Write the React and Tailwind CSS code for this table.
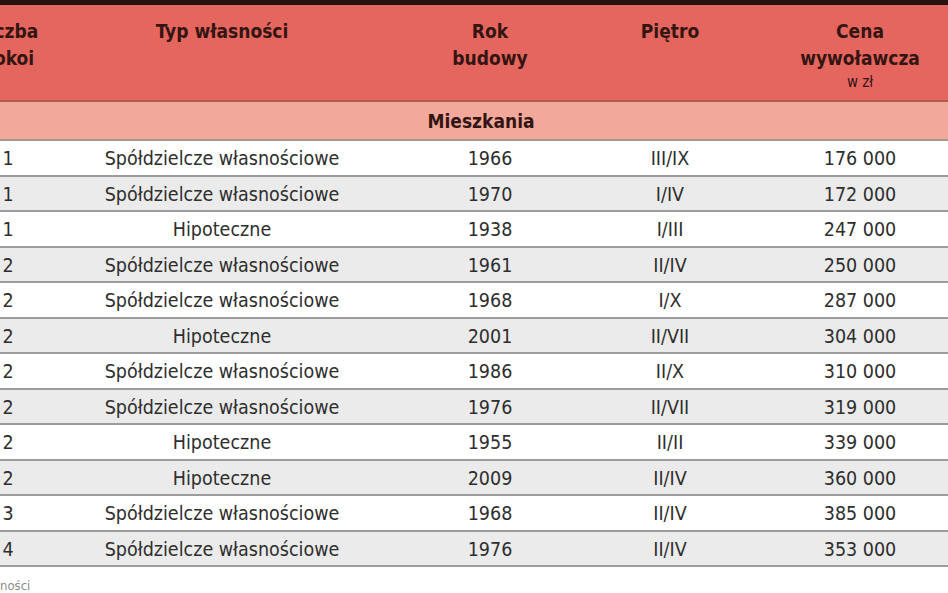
const rows = [
  ["1", "Spółdzielcze własnościowe", "1966", "III/IX", "176 000"],
  ["1", "Spółdzielcze własnościowe", "1970", "I/IV", "172 000"],
  ["1", "Hipoteczne", "1938", "I/III", "247 000"],
  ["2", "Spółdzielcze własnościowe", "1961", "II/IV", "250 000"],
  ["2", "Spółdzielcze własnościowe", "1968", "I/X", "287 000"],
  ["2", "Hipoteczne", "2001", "II/VII", "304 000"],
  ["2", "Spółdzielcze własnościowe", "1986", "II/X", "310 000"],
  ["2", "Spółdzielcze własnościowe", "1976", "II/VII", "319 000"],
  ["2", "Hipoteczne", "1955", "II/II", "339 000"],
  ["2", "Hipoteczne", "2009", "II/IV", "360 000"],
  ["3", "Spółdzielcze własnościowe", "1968", "II/IV", "385 000"],
  ["4", "Spółdzielcze własnościowe", "1976", "II/IV", "353 000"],
];

const cols = "grid grid-cols-[76px_352px_184px_176px_204px]";

export default function App() {
  return (
    <div
      className="w-[948px] h-[593px] overflow-hidden bg-white"
      style={{ fontFamily: '"DejaVu Sans Condensed", "Liberation Sans Narrow", sans-serif' }}
    >
      <div className="-ml-[30px] w-[992px]">
        <div className="h-[5px] bg-[#24130f]" />
        {/* header */}
        <div className={`${cols} h-[97px] bg-[#e4665e] border-b-2 border-[#b05a50] pt-[13px] text-[19px] leading-[27px] font-bold text-[#341512] text-center`}>
          <div>Liczba<br />pokoi</div>
          <div>Typ własności</div>
          <div>Rok<br />budowy</div>
          <div>Piętro</div>
          <div>
            Cena<br />wywoławcza
            <div className="text-[15px] leading-[20px] font-normal">w zł</div>
          </div>
        </div>
        {/* section */}
        <div className="h-[39px] bg-[#f2a99b] border-b-2 border-[#a89890] flex items-center justify-center pt-[2px] text-[19px] font-bold text-[#341512] pl-[30px]">
          Mieszkania
        </div>
        {rows.map((r, i) => (
          <div
            key={i}
            className={`${cols} h-[35.5px] items-center pt-[2px] border-b-2 border-[#9c9c9c] text-[19.5px] text-[#2e2e2e] text-center ${i % 2 ? "bg-[#ebebeb]" : "bg-white"}`}
          >
            {r.map((c, j) => (
              <div key={j}>{c}</div>
            ))}
          </div>
        ))}
        <div className="pl-[30px] pt-[11px] text-[13px] text-[#8a8a8a] leading-[16px]">
          ności
        </div>
      </div>
    </div>
  );
}
